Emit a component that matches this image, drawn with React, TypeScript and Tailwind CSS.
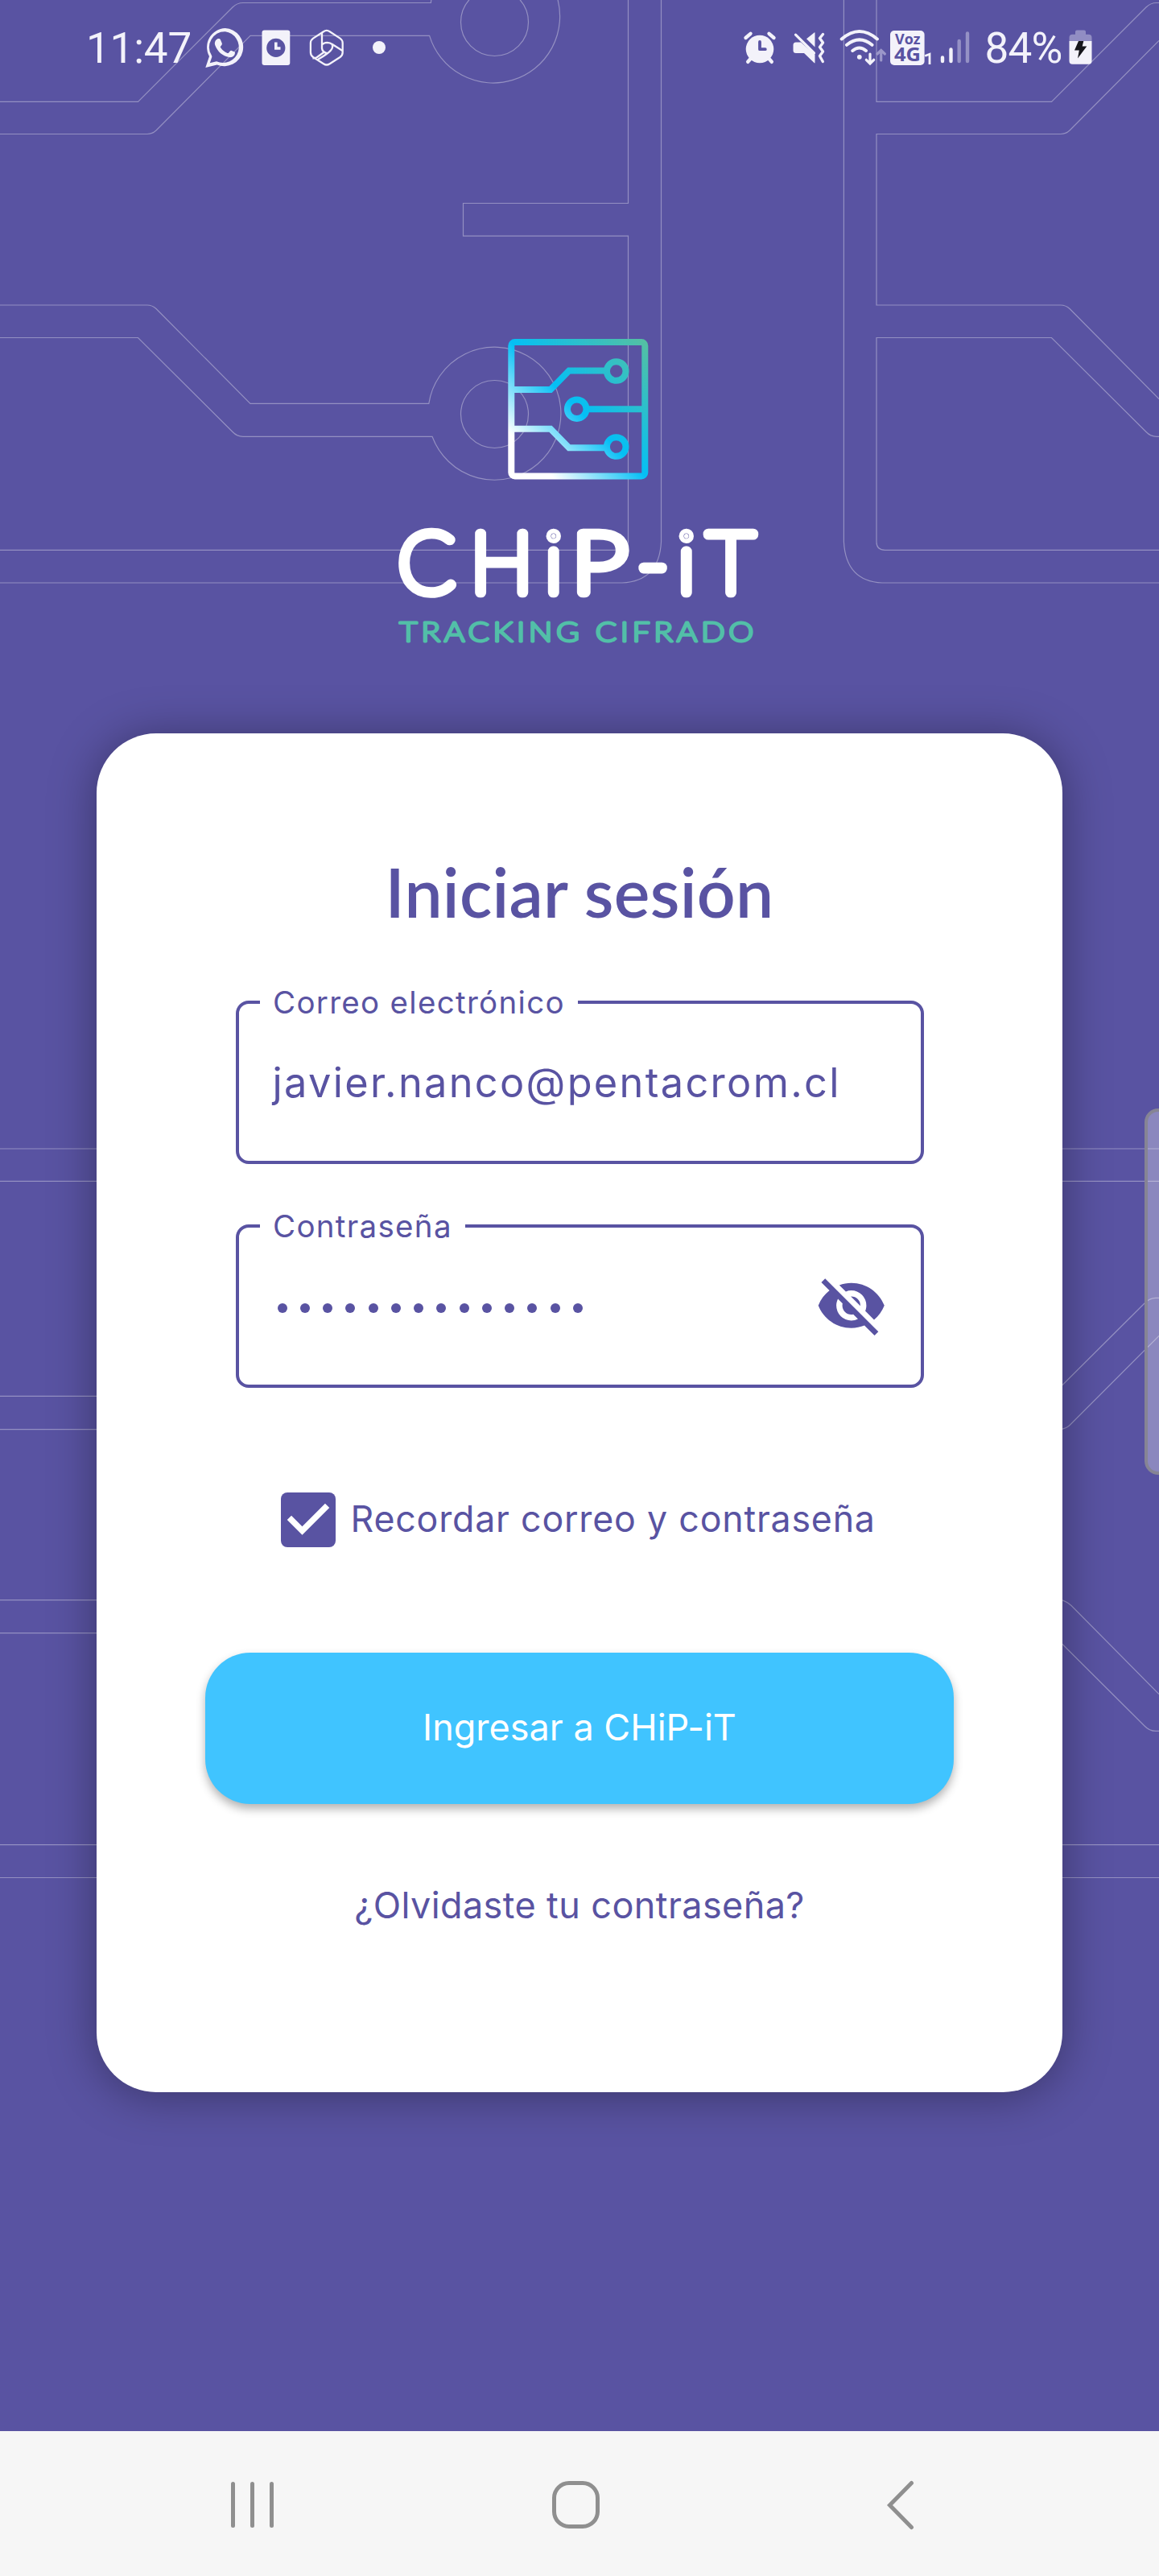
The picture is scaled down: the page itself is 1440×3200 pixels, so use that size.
import type { ReactNode } from "react";

function CircuitBackdrop() {
  return (
    <svg className="absolute inset-0 h-[3020px] w-[1440px]" viewBox="0 0 1440 3020" fill="none" stroke="#9490c2" strokeWidth="1.2" aria-hidden="true">
      {/* upper left traces */}
      <path d="M0 126.4H171.5L289 9Q294.5 3.5 302 3.5H535.4Q535.5 0 537 -4" />
      <path d="M0 166.5H183Q189 166.5 194 162L311 44.4H533.6A82.7 82.7 0 1 0 692 -4" />
      <circle cx="614.5" cy="27.5" r="42" />
      <path d="M0 379H183Q189 379 194 383.5L311 501.4H532.8A82.5 82.5 0 1 1 537 542.3H302Q294.5 542.3 289 536.5L171.5 419.5H0" />
      <circle cx="614.5" cy="514.5" r="42" />
      <path d="M780.5 0V252.5H575.5V293.2H780.5V673Q780.5 683.3 769 683.3H0" />
      <path d="M821.5 0V673Q819 722 773 724H0" />
      {/* upper right traces */}
      <path d="M1048.4 0V673Q1051 722 1096 724H1440" />
      <path d="M1089 0V126.4H1306.5L1424 9Q1429.5 3.5 1437 3.5H1440" />
      <path d="M1440 50.5L1329 162Q1324 166.5 1318 166.5H1089V379H1318Q1324 379 1329 383.5L1440 495.7" />
      <path d="M1440 542.3H1437Q1429.5 542.3 1424 536.5L1306.5 419.5H1089V673Q1089 683.3 1099.5 683.3H1440" />
      {/* lower traces */}
      <path d="M0 1427H1440M0 1467.4H1440M0 2291.7H1440M0 2332.5H1440" />
      <path d="M0 1734.4H130M0 1775.7H130M0 1987.6H130M0 2028.7H130" />
      <path d="M1310 1730.5L1422 1619Q1428 1612.5 1436 1612.3H1440M1310 1775.5H1317Q1324 1775 1329 1770.5L1440 1659.3" />
      <path d="M1310 1987.6H1317Q1324 1988 1331 1994.5L1440 2104.5M1310 2032.5L1422 2144Q1428 2150.4 1436 2150.4H1440" />
    </svg>
  );
}

function WhatsApp() {
  return (
    <svg className="h-[60px] w-[54px]" viewBox="253 30 54 60" fill="#f3f2fa">
      <path fillRule="evenodd" d="M279.8 35A23.6 23.6 0 1 1 269.6 80.4L255.3 84L260 70A23.6 23.6 0 0 1 279.8 35ZM279.8 39.2A19.5 19.5 0 0 0 263 69L263.4 70.5L260.8 78.2L269 76.2A19.5 19.5 0 1 0 279.8 39.2Z" />
      <path d="M270.2 48.3C271.5 47.6 273.2 47.7 273.9 49.3L275.8 53.8C276.2 55 275.6 56 274 57.8C273.6 58.4 274 59 274.6 59.8C276.5 62.5 279 64.6 282.5 66C283.3 66.3 283.8 66 284.4 65.2C286 63.2 286.3 62.3 287.8 62.9L291.5 64.6C292.3 65 292.1 66.5 291.3 68.3C290 70.6 287 71.6 284.5 71.1C276.5 69.6 270.5 64.5 267.3 56.3C266.2 53.2 267.4 49.8 270.2 48.3Z" />
    </svg>
  );
}

function ClockCard() {
  return (
    <svg className="h-[60px] w-[36px]" viewBox="324.5 30 36 60">
      <rect x="325" y="37.6" width="34.8" height="43.4" rx="3" fill="#f3f2fa" />
      <circle cx="342.3" cy="59.4" r="11.6" fill="#5953a2" />
      <path d="M342.3 52.5V60H348" fill="none" stroke="#f3f2fa" strokeWidth="3.6" />
    </svg>
  );
}

function HexApp() {
  return (
    <svg className="h-[60px] w-[44px]" viewBox="383.5 30 44 60" fill="none" stroke="#f3f2fa" strokeWidth="2.3" strokeLinejoin="round">
      <path d="M401.5 39.2Q405.3 36.6 409.2 39.2L422 47.6Q425.2 49.8 425.2 53.5V65Q425.2 68.7 422 71L409.2 79.2Q405.3 81.8 401.5 79.2L388.6 71Q385.4 68.7 385.4 65V53.5Q385.4 49.8 388.6 47.6Z" />
      <path d="M399.5 40.5V60Q400 64.5 405.5 66.2M399.5 56Q401.5 52.8 406 52.8Q410 53 412 54.8L425 63M412 54.8Q413.8 59 410.5 62.5Q408 66 394 74.2M388 72.3Q390.5 72.6 393.5 71L402.5 64.5" />
    </svg>
  );
}

function AlarmIcon() {
  return (
    <svg className="h-[60px] w-[42px]" viewBox="923 30 42 60">
      <circle cx="944" cy="61" r="17.3" fill="#f3f2fa" />
      <path d="M926.5 47L932.5 41.8M961.5 47L955.5 41.8M932.5 73L929.2 76.8M955.5 73L958.8 76.8" stroke="#f3f2fa" strokeWidth="4.4" strokeLinecap="round" />
      <path d="M944 52V61.2H950.8" fill="none" stroke="#5953a2" strokeWidth="3.8" strokeLinecap="round" strokeLinejoin="round" />
    </svg>
  );
}

function MuteIcon() {
  return (
    <svg className="h-[60px] w-[42px]" viewBox="983.5 30 42 60" fill="#f3f2fa">
      <path d="M1001.5 48.2L1011.5 40.3Q1012 40 1012 41V58.5Z" />
      <path d="M988.5 52.5H994.5L1012 68V78Q1012 78.8 1011 78L998.5 66H988.5Q985 66 985 62.5V56Q985 52.5 988.5 52.5Z" />
      <path d="M988 43.2L1011 66" stroke="#f3f2fa" strokeWidth="3.2" strokeLinecap="round" />
      <path d="M1022 42.5L1018 47.5L1022 53L1018 58.5L1022 64L1018 69.5L1021.8 76.5" fill="none" stroke="#f3f2fa" strokeWidth="3.4" strokeLinecap="round" strokeLinejoin="round" />
    </svg>
  );
}

function WifiIcon() {
  return (
    <svg className="h-[60px] w-[60px]" viewBox="1041.5 30 60 60" fill="none" stroke="#f3f2fa" strokeWidth="4" strokeLinecap="round">
      <path d="M1045.2 48.5Q1067.3 29.5 1089.4 48.5M1051.5 55.8Q1067.3 43 1083 55.8M1058.8 63Q1067.3 56 1075.5 63" />
      <circle cx="1067.3" cy="70.8" r="2.9" fill="#f3f2fa" stroke="none" />
      <path d="M1080.5 67V78.5M1075.8 74.3L1080.5 79L1085.2 74.3" strokeWidth="3.2" />
      <path d="M1094.2 75V63M1089.5 67L1094.2 62.5L1098.9 67" strokeWidth="3.2" stroke="#9b97c9" />
    </svg>
  );
}

function VoLteIcon() {
  return (
    <svg className="h-[60px] w-[54px]" viewBox="1105 30 54 60">
      <rect x="1106" y="38" width="42.6" height="43" rx="5" fill="#f3f2fa" />
      <text className="font-['Open_Sans',sans-serif] font-bold" fill="#5953a2">
        <tspan x="1112" y="54.6" textLength="31.5" lengthAdjust="spacingAndGlyphs" className="text-[18px]">Voz</tspan>
        <tspan x="1111" y="76.3" textLength="33" lengthAdjust="spacingAndGlyphs" className="text-[24px]">4G</tspan>
      </text>
      <path d="M1149.2 69.5L1155 67.2V80" fill="none" stroke="#f3f2fa" strokeWidth="2.8" />
    </svg>
  );
}

function SignalIcon() {
  return (
    <svg className="h-[60px] w-[37px]" viewBox="1168 30 37 60" strokeWidth="4.4" strokeLinecap="round">
      <path d="M1171 71.5V76M1181.5 61.5V76" stroke="#f3f2fa" />
      <path d="M1191.7 51V76M1202 41.5V76" stroke="#9591c5" />
    </svg>
  );
}

function BatteryIcon() {
  return (
    <svg className="h-[60px] w-[29px]" viewBox="1327.5 30 29 60">
      <path d="M1335.5 51V39.5Q1335.5 37.5 1337.5 37.5H1346.5Q1348.5 37.5 1348.5 39.5V42.8H1352Q1356 42.8 1356 47V51H1328V47Q1328 42.8 1332 42.8H1335.5Z" fill="#918dc3" />
      <path d="M1328 51H1356V75.5Q1356 79.8 1352 79.8H1332Q1328 79.8 1328 75.5Z" fill="#f3f2fa" />
      <path d="M1339.5 51H1345.8L1344.2 57.5H1349.8L1338.5 72.5L1340.3 62.5H1334.5Z" fill="#16161c" />
    </svg>
  );
}

function StatusBar() {
  return (
    <header className="relative flex h-[118px] items-start pt-[30px] font-[Roboto,sans-serif] text-[53px] leading-[60px] text-[#f3f2fa]">
      <span className="ml-[107px] w-[146px] tracking-[-0.2px]">11:47</span>
      <WhatsApp />
      <span className="ml-[17.5px] flex"><ClockCard /></span>
      <span className="ml-[23px] flex"><HexApp /></span>
      <span className="mt-[21px] ml-[35.5px] size-4 rounded-full bg-[#f3f2fa]" />
      <span className="ml-[444px] flex"><AlarmIcon /></span>
      <span className="ml-[18.5px] flex"><MuteIcon /></span>
      <span className="ml-4 flex"><WifiIcon /></span>
      <span className="ml-[3.5px] flex"><VoLteIcon /></span>
      <span className="ml-[9px] flex"><SignalIcon /></span>
      <span className="ml-[18.5px] w-[104px] tracking-[-0.8px]">84%</span>
      <BatteryIcon />
    </header>
  );
}

function Logo() {
  return (
    <svg className="relative mx-auto mt-[292px] h-[400px] w-[480px] shrink-0" viewBox="480 410 480 400" role="img" aria-label="CHiP-iT Tracking cifrado">
      <defs>
        <linearGradient id="chip" gradientUnits="userSpaceOnUse" x1="633" y1="593" x2="803" y2="423">
          <stop offset="0.16" stopColor="#ffffff" />
          <stop offset="0.5" stopColor="#04bff5" />
          <stop offset="1" stopColor="#55c0a2" />
        </linearGradient>
      </defs>
      <g fill="none" stroke="url(#chip)" strokeWidth="8">
        <rect x="635.3" y="425" width="166" height="166.5" rx="4.5" />
        <path d="M639 484H684L707 460.5H751M732 508.2H798M639 532.7H684L707 556.3H751" />
        <circle cx="765.7" cy="461" r="11.8" />
        <circle cx="716.7" cy="508.2" r="11.8" />
        <circle cx="765.7" cy="555" r="11.8" />
      </g>
      <text y="736" className="font-[Lato,sans-serif] text-[103.5px] font-thin" fill="#fff" stroke="#fff" strokeWidth="12.6" strokeLinejoin="round">
        <tspan x="494.5 584.5 677">CHi</tspan>
        <tspan x="710" textLength="70" lengthAdjust="spacingAndGlyphs">P</tspan>
        <tspan x="792 842 878.5">-iT</tspan>
      </text>
      <text x="496" y="796.8" textLength="445" lengthAdjust="spacingAndGlyphs" className="font-[Lato,sans-serif] text-[34px] font-light tracking-[4px]" fill="#52bfa8" stroke="#52bfa8" strokeWidth="2.8" strokeLinejoin="round">TRACKING CIFRADO</text>
    </svg>
  );
}

function Field({ label, children }: { label: string; children: ReactNode }) {
  return (
    <fieldset className="mx-[172.5px] h-[221px] rounded-[16px] border-4 border-[#5953a2] pl-[26px]">
      <legend className="h-10 px-[16.5px] text-[38.5px] leading-10 font-[380] tracking-[1.3px]">{label}</legend>
      {children}
    </fieldset>
  );
}

function EyeOff() {
  return (
    <svg className="mr-[41px] size-[89.5px]" viewBox="0 0 24 24" fill="currentColor">
      <path d="M11.83 9L15 12.16V12A3 3 0 0 0 12 9ZM7.53 9.8L9.08 11.35C9.03 11.56 9 11.77 9 12A3 3 0 0 0 12 15C12.22 15 12.44 14.97 12.65 14.92L14.2 16.47C13.53 16.8 12.79 17 12 17A5 5 0 0 1 7 12C7 11.21 7.2 10.47 7.53 9.8ZM2 4.27L4.28 6.55L4.73 7C3.08 8.3 1.78 10 1 12C2.73 16.39 7 19.5 12 19.5C13.55 19.5 15.03 19.2 16.38 18.66L16.81 19.08L19.73 22L21 20.73L3.27 3ZM12 7A5 5 0 0 1 17 12C17 12.64 16.87 13.26 16.64 13.82L19.57 16.75C21.07 15.5 22.27 13.86 23 12C21.27 7.61 17 4.5 12 4.5C10.6 4.5 9.26 4.75 8 5.2L10.17 7.35C10.74 7.13 11.35 7 12 7Z" />
    </svg>
  );
}

function LoginCard() {
  return (
    <main className="relative mx-auto mt-[101px] flex h-[1688px] w-[1200px] shrink-0 flex-col rounded-[74px] bg-white font-[Inter,sans-serif] text-[#5953a2] shadow-[0_4px_58px_rgba(0,0,0,0.36)]">
      <h1 className="mt-[155px] text-center font-[Lato,sans-serif] text-[84px] leading-[84px] font-semibold tracking-[0.3px]">Iniciar sesión</h1>
      <div className="mt-[75px] flex flex-col gap-[56.5px]">
        <Field label="Correo electrónico">
          <p className="pt-[50px] pl-[16px] text-[50.5px] leading-[60px] font-[380] tracking-[2.3px]">javier.nanco@pentacrom.cl</p>
        </Field>
        <Field label="Contraseña">
          <div className="flex items-center justify-between pt-[34px]">
            <div className="mt-[7px] flex gap-[16.26px] pl-[22px]">
              {Array.from({ length: 14 }, (_, i) => (
                <span key={i} className="size-3 rounded-full bg-[#5953a2]" />
              ))}
            </div>
            <EyeOff />
          </div>
        </Field>
      </div>
      <label className="mt-[130.5px] ml-[228.5px] flex h-[68px] items-center">
        <span className="flex size-[68px] items-center justify-center rounded-[8px] bg-[#5953a2]">
          <svg className="size-[90px] shrink-0" viewBox="0 0 24 24" fill="#fff"><path d="M10 17L5 12L6.41 10.59L10 14.17L17.59 6.58L19 8Z" /></svg>
        </span>
        <span className="-mt-0.5 ml-[19px] text-[44.7px] leading-[60px] font-[380] tracking-[0.8px]">Recordar correo y contraseña</span>
      </label>
      <button className="mx-auto mt-[130.5px] h-[188px] w-[930px] rounded-[56px] bg-[#40c4ff] pb-[1px] text-[45px] font-[380] text-white shadow-[0_6px_12px_rgba(0,0,0,0.3)]">Ingresar a CHiP-iT</button>
      <a className="mt-[96.5px] text-center text-[45px] leading-[60px] font-[380] tracking-[0.4px]">¿Olvidaste tu contraseña?</a>
    </main>
  );
}

function NavBar() {
  return (
    <nav className="relative mt-auto flex h-[180px] items-center bg-[#f6f6f6] pt-[3px] text-[#8f8f8f]">
      <div className="ml-[287px] flex h-[57px] w-[53px] justify-between">
        <span className="w-[5px] rounded-full bg-current" />
        <span className="w-[5px] rounded-full bg-current" />
        <span className="w-[5px] rounded-full bg-current" />
      </div>
      <span className="ml-[346px] h-[59px] w-[59px] rounded-[21px] border-[5px] border-current" />
      <svg className="ml-[356px] h-[62px] w-[36px]" viewBox="0 0 36 62" fill="none" stroke="currentColor" strokeWidth="5" strokeLinecap="round">
        <path d="M31.5 3.5L4.5 31L31.5 58.5" />
      </svg>
    </nav>
  );
}

export default function App() {
  return (
    <div className="relative flex h-[3200px] w-[1440px] flex-col overflow-hidden bg-[#5953a2]">
      <CircuitBackdrop />
      <StatusBar />
      <Logo />
      <LoginCard />
      <div className="absolute top-[1377px] right-0 h-[455px] w-[18px] rounded-l-[17px] border-4 border-r-0 border-[#868494] bg-white/30" />
      <NavBar />
    </div>
  );
}
